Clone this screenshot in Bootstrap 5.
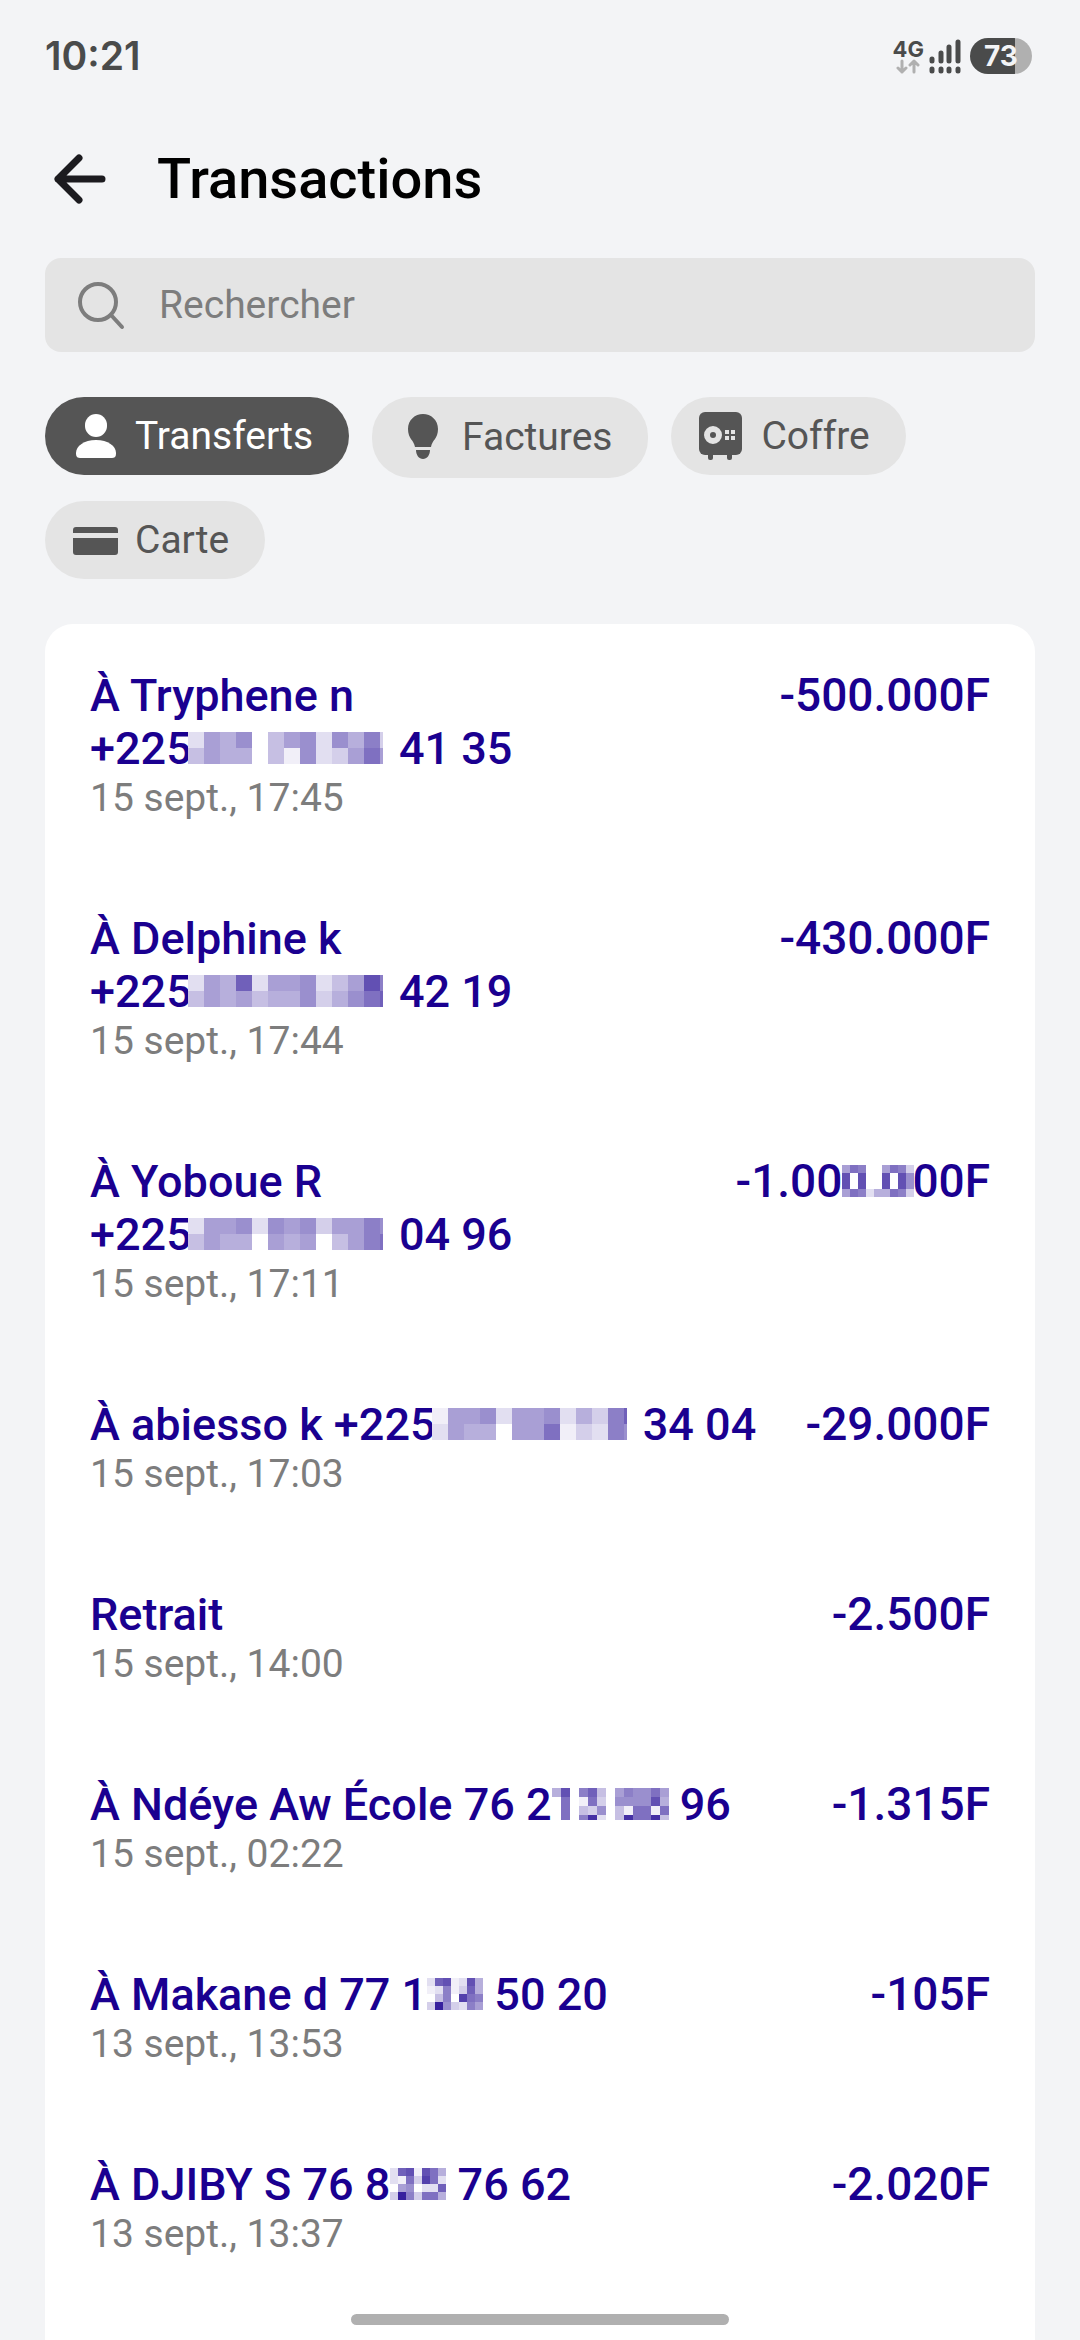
<!DOCTYPE html>
<html lang="fr">
<head>
<meta charset="utf-8">
<meta name="viewport" content="width=device-width, initial-scale=1">
<title>Transactions</title>
<link href="https://cdn.jsdelivr.net/npm/bootstrap@5.3.0/dist/css/bootstrap.min.css" rel="stylesheet">
<style>
  :root { --ink: #1a0090; --page: #f3f4f6; --chip: #e4e4e4; --grey: #555; --muted: #7d7d7d; }
  body { background: var(--page); font-family: Roboto, "Liberation Sans", sans-serif; }
  .screen { padding: 0 45px; }
  .statusbar { height: 112px; padding-right: 3px; color: #4a4b4b; font-family: Inter, Roboto, sans-serif; }
  .clock { font-size: 39px; line-height: 48px; font-weight: 600; }
  .net { font-size: 22px; line-height: 20px; font-weight: 700; }
  .battery { width: 62px; height: 36px; border-radius: 18px; color: #f3f4f6; font-size: 28px; line-height: 36px; font-weight: 700;
    background: linear-gradient(90deg, #4a4b4b 45px, #b0b0b0 45px); }
  .topbar { height: 134px; gap: 44px; margin-bottom: 12px; }
  .topbar h1 { font-size: 56px; line-height: 66px; font-weight: 500; color: #000; }
  .searchbox { height: 94px; border-radius: 16px; background: var(--chip); color: var(--muted); padding: 0 28px; gap: 30px; }
  .searchbox input { font-size: 39px; line-height: 46px; color: var(--grey); }
  .searchbox input::placeholder { color: var(--muted); opacity: 1; }
  .chips { gap: 23px; margin: 45px 0; }
  .chip { border: 0; border-radius: 39px; background: var(--chip); color: var(--grey); font-size: 39px; line-height: 46px; padding: 16px 36px 16px 28px; gap: 17px; }
  .chip.tall { padding-top: 17px; padding-bottom: 18px; }
  .chip.active { background: var(--grey); color: #fff; }
  .chip svg { margin: -2px 0; }
  .txcard { background: #fff; border-radius: 28px 28px 0 0; }
  .tx { padding: 45px; gap: 45px; color: var(--ink); font-size: 45px; line-height: 53px; font-weight: 500; }
  .tx time { font-size: 39px; line-height: 47px; font-weight: 400; color: var(--muted); }
  .amount { font-size: 46px; }
  .mosaic { height: 32px; vertical-align: baseline; background: #fff; }
  .mosaic.wide { margin-left: -4px; margin-right: 5px; }
  .amount .mosaic { margin-right: -2px; }
  .homebar { width: 378px; height: 11px; background: #b0b0b0; bottom: 15px; }
</style>
</head>
<body>
<div class="screen min-vh-100 d-flex flex-column">
  <div class="statusbar d-flex align-items-center justify-content-between">
    <span class="clock">10:21</span>
    <div class="d-flex align-items-center">
      <div class="net d-flex flex-column align-items-center me-1">
        <span>4G</span>
        <svg width="24" height="15" viewBox="0 0 24 15" fill="none" stroke="#b0b0b0" stroke-width="3" stroke-linecap="round" stroke-linejoin="round"><path d="M6 2v11M2 9l4 4 4-4M18 13V2M14 6l4-4 4 4"/></svg>
      </div>
      <svg class="me-2" width="34" height="36" viewBox="0 0 34 36" fill="none" stroke="#4a4b4b" stroke-width="5" stroke-linecap="round"><path d="M4 21v2M13 15v8M21 9v14M30 4v19M4 31v2M13 31v2M21 31v2M30 31v2"/></svg>
      <div class="battery text-center">73</div>
    </div>
  </div>

  <header class="topbar d-flex align-items-center">
    <a href="#" aria-label="Retour" class="d-flex">
      <svg width="68" height="67" viewBox="0 0 68 67" fill="none" stroke="#1c1b1f" stroke-width="7" stroke-linecap="round" stroke-linejoin="round"><path d="M57 33H13M34 12 13 33l21 21"/></svg>
    </a>
    <h1 class="m-0">Transactions</h1>
  </header>

  <form class="searchbox d-flex align-items-center">
    <label for="q" class="d-flex" aria-label="Rechercher">
      <svg width="56" height="56" viewBox="0 0 56 56" fill="none" stroke="currentColor" stroke-width="4" stroke-linecap="round"><circle cx="25" cy="25" r="18"/><path d="m38 38 11 12"/></svg>
    </label>
    <input id="q" type="text" class="form-control-plaintext p-0 border-0" placeholder="Rechercher">
  </form>

  <nav class="chips d-flex flex-wrap align-items-start" aria-label="Filtres">
    <button type="button" class="chip active d-flex align-items-center">
      <svg width="45" height="48" viewBox="0 0 45 48" fill="currentColor"><rect x="12" y="2" width="22" height="23" rx="11"/><path d="M23 28c12 0 20 6 20 13v1c0 3-2 4-4 4H7c-2 0-4-1-4-4v-1c0-7 8-13 20-13z"/></svg>
      Transferts</button>
    <button type="button" class="chip tall d-flex align-items-center">
      <svg width="45" height="48" viewBox="0 0 45 48" fill="currentColor"><path d="M23 1c8 0 15 6 15 15 0 10-6 11-7 18H15C14 27 8 26 8 16 8 7 15 1 23 1zM16 37h14c0 5-3 9-7 9s-7-4-7-9z"/></svg>
      Factures</button>
    <button type="button" class="chip d-flex align-items-center">
      <svg width="45" height="50" viewBox="0 0 45 50"><g fill="currentColor"><rect x="0" y="1" width="43" height="43" rx="6"/><rect x="9" y="40" width="5" height="9" rx="2"/><rect x="28" y="40" width="5" height="9" rx="2"/></g><circle cx="14" cy="24" r="6" fill="none" stroke="#e4e4e4" stroke-width="6"/><path fill="#e4e4e4" d="M26 19h4v4h-4zM32 19h4v4h-4zM26 25h4v4h-4zM32 25h4v4h-4z"/></svg>
      Coffre</button>
    <button type="button" class="chip d-flex align-items-center">
      <svg width="45" height="48" viewBox="0 0 45 48" fill="currentColor"><path d="M3 11h39q3 0 3 3v3H0v-3q0-3 3-3zM0 22h45v14q0 3-3 3H3q-3 0-3-3z"/></svg>
      Carte</button>
  </nav>

  <main class="txcard flex-grow-1">
    <ul class="list-unstyled m-0">
      <li class="tx d-flex justify-content-between"><div><div>À Tryphene n</div><div class="text-nowrap">+225<svg class="mosaic wide" width="195" data-cell="16" data-rows="2657046727583 4655041723696"></svg> 41 35</div><time class="d-block">15 sept., 17:45</time></div><div class="amount">-500.000F</div></li>
      <li class="tx d-flex justify-content-between"><div><div>À Delphine k</div><div class="text-nowrap">+225<svg class="mosaic wide" width="195" data-cell="16" data-rows="265A2667246B8 465645573579A"></svg> 42 19</div><time class="d-block">15 sept., 17:44</time></div><div class="amount">-430.000F</div></li>
      <li class="tx d-flex justify-content-between"><div><div>À Yoboue R</div><div class="text-nowrap">+225<svg class="mosaic wide" width="195" data-cell="16" data-rows="2667276736687 4655065604689"></svg> 04 96</div><time class="d-block">15 sept., 17:11</time></div><div class="amount text-nowrap">-1.00<svg class="mosaic" width="72" data-cell="8" data-rows="698006983 B0B00B0B7 B0B00B0B7 698255983"></svg>00F</div></li>
      <li class="tx d-flex justify-content-between"><div><div class="text-nowrap">À abiesso k +225<svg class="mosaic wide" width="195" data-cell="16" data-rows="166726672538A 2655066913287"></svg> 34 04</div><time class="d-block">15 sept., 17:03</time></div><div class="amount">-29.000F</div></li>
      <li class="tx d-flex justify-content-between"><div><div>Retrait</div><time class="d-block">15 sept., 14:00</time></div><div class="amount">-2.500F</div></li>
      <li class="tx d-flex justify-content-between"><div><div class="text-nowrap">À Ndéye Aw École 76 2<svg class="mosaic" width="117" data-cell="9" data-rows="5B08A40687796 09019307777B5 0904370419919 0908D204D99D4"></svg> 96</div><time class="d-block">15 sept., 02:22</time></div><div class="amount">-1.315F</div></li>
      <li class="tx d-flex justify-content-between"><div><div class="text-nowrap">À Makane d 77 1<svg class="mosaic" width="56" data-cell="8" data-rows="2AB12B5 12813A5 0480C98 3E73286"></svg> 50 20</div><time class="d-block">13 sept., 13:53</time></div><div class="amount">-105F</div></li>
      <li class="tx d-flex justify-content-between"><div><div class="text-nowrap">À DJIBY S 76 8<svg class="mosaic" width="56" data-cell="8" data-rows="2AB1B95 2193C92 067022A 3E83995"></svg> 76 62</div><time class="d-block">13 sept., 13:37</time></div><div class="amount">-2.020F</div></li>
    </ul>
  </main>
</div>
<div class="homebar rounded-pill position-fixed start-50 translate-middle-x"></div>
<script src="https://cdn.jsdelivr.net/npm/bootstrap@5.3.0/dist/js/bootstrap.bundle.min.js"></script>
<script>
  // Each hex digit is the ink density of one tile of the redaction mosaic.
  document.querySelectorAll('.mosaic').forEach(function (svg) {
    var size = Number(svg.dataset.cell);
    svg.setAttribute('shape-rendering', 'crispEdges');
    svg.dataset.rows.split(' ').forEach(function (row, y) {
      row.split('').forEach(function (digit, x) {
        var tile = document.createElementNS('http://www.w3.org/2000/svg', 'rect');
        tile.setAttribute('x', x * size);
        tile.setAttribute('y', y * size);
        tile.setAttribute('width', size);
        tile.setAttribute('height', size);
        tile.setAttribute('fill', '#1a0090');
        tile.setAttribute('fill-opacity', parseInt(digit, 16) / 16);
        svg.appendChild(tile);
      });
    });
  });
</script>
</body>
</html>
